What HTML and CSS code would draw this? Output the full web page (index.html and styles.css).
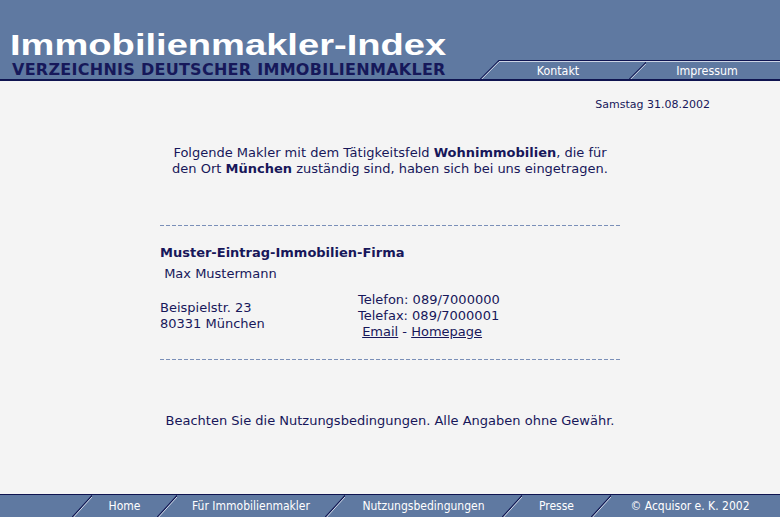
FILE: index.html
```html
<!DOCTYPE html>
<html lang="de">
<head>
<meta charset="utf-8">
<title>Immobilienmakler-Index</title>
<link rel="stylesheet" href="styles.css">
</head>
<body>
<div class="page">
  <header class="header">
    <div class="brand">
      <div class="title">Immobilienmakler-Index</div>
      <div class="subtitle">VERZEICHNIS DEUTSCHER IMMOBILIENMAKLER</div>
    </div>
    <nav class="tabs">
      <svg class="tab-slash" width="19" height="19" viewBox="0 0 19 19">
        <line x1="0" y1="19.5" x2="19.5" y2="0" stroke="#0f1450" stroke-width="1.2"/>
        <line x1="1.3" y1="19.5" x2="19.5" y2="1.3" stroke="#d3dae8" stroke-width="1"/>
      </svg>
      <div class="tabrow">
        <a class="tab tab-first">Kontakt</a>
        <svg class="tab-slash-inner" width="17" height="17" viewBox="0 0 17 17">
          <line x1="0" y1="17.5" x2="17.5" y2="0" stroke="#0f1450" stroke-width="1.2"/>
          <line x1="1.3" y1="17.5" x2="18" y2="0.8" stroke="#d3dae8" stroke-width="1"/>
        </svg>
        <a class="tab tab-last">Impressum</a>
      </div>
    </nav>
  </header>

  <main class="main">
    <div class="date">Samstag 31.08.2002</div>
    <div class="content">
      <p class="intro">Folgende Makler mit dem Tätigkeitsfeld <b>Wohnimmobilien</b>, die für<br>den Ort <b>München</b> zuständig sind, haben sich bei uns eingetragen.</p>
      <div class="rule"></div>
      <div class="entry">
        <div class="company">Muster-Eintrag-Immobilien-Firma</div>
        <div class="person">&nbsp;Max Mustermann</div>
        <div class="contact">
          <div class="address">Beispielstr. 23<br>80331 München</div>
          <div class="phones">Telefon: 089/7000000<br>Telefax: 089/7000001<br>&nbsp;<a class="link">Email</a> - <a class="link">Homepage</a></div>
        </div>
      </div>
      <div class="rule rule-bottom"></div>
      <p class="notice">Beachten Sie die Nutzungsbedingungen. Alle Angaben ohne Gewähr.</p>
    </div>
  </main>

  <footer class="footer">
    <div class="foot-lead"></div>
    <svg class="foot-slash" width="20" height="22" viewBox="0 0 20 22"><line x1="0" y1="22.5" x2="20.5" y2="0" stroke="#0f1450" stroke-width="1.2"/><line x1="1.3" y1="22.5" x2="21" y2="0.9" stroke="#d3dae8" stroke-width="1"/></svg>
    <a class="foot-item w-home">Home</a>
    <svg class="foot-slash" width="20" height="22" viewBox="0 0 20 22"><line x1="0" y1="22.5" x2="20.5" y2="0" stroke="#0f1450" stroke-width="1.2"/><line x1="1.3" y1="22.5" x2="21" y2="0.9" stroke="#d3dae8" stroke-width="1"/></svg>
    <a class="foot-item w-makler">Für Immobilienmakler</a>
    <svg class="foot-slash" width="20" height="22" viewBox="0 0 20 22"><line x1="0" y1="22.5" x2="20.5" y2="0" stroke="#0f1450" stroke-width="1.2"/><line x1="1.3" y1="22.5" x2="21" y2="0.9" stroke="#d3dae8" stroke-width="1"/></svg>
    <a class="foot-item w-nutz">Nutzungsbedingungen</a>
    <svg class="foot-slash" width="20" height="22" viewBox="0 0 20 22"><line x1="0" y1="22.5" x2="20.5" y2="0" stroke="#0f1450" stroke-width="1.2"/><line x1="1.3" y1="22.5" x2="21" y2="0.9" stroke="#d3dae8" stroke-width="1"/></svg>
    <a class="foot-item w-presse">Presse</a>
    <svg class="foot-slash" width="20" height="22" viewBox="0 0 20 22"><line x1="0" y1="22.5" x2="20.5" y2="0" stroke="#0f1450" stroke-width="1.2"/><line x1="1.3" y1="22.5" x2="21" y2="0.9" stroke="#d3dae8" stroke-width="1"/></svg>
    <span class="foot-item w-copy">© Acquisor e. K. 2002</span>
  </footer>
</div>
</body>
</html>
```

FILE: styles.css
```css
* { box-sizing: border-box; }
html, body { margin: 0; padding: 0; }
body {
  background: #f4f4f4;
  color: #17175a;
  font-family: "DejaVu Sans", Verdana, sans-serif;
  font-size: 13px;
  line-height: 16px;
}
.page {
  display: flex;
  flex-direction: column;
  height: 100vh;
}

/* header */
.header {
  flex: none;
  height: 81px;
  background: #5f79a1;
  border-bottom: 2px solid #0f1450;
  display: flex;
  align-items: flex-end;
}
.brand {
  flex: 1;
  padding-left: 10px;
  padding-bottom: 2px;
}
.title {
  font-family: "Liberation Sans", Arial, sans-serif;
  font-weight: bold;
  font-size: 30px;
  line-height: 30px;
  color: #ffffff;
  white-space: nowrap;
  transform: scaleX(1.27);
  transform-origin: left center;
}
.subtitle {
  font-family: "DejaVu Sans", Verdana, sans-serif;
  font-weight: bold;
  font-size: 16px;
  line-height: 14px;
  letter-spacing: 0.27px;
  color: #16185a;
  margin-top: 3px;
  padding-left: 2px;
  white-space: nowrap;
}
.tabs {
  flex: none;
  width: 300px;
  height: 19px;
  display: flex;
}
.tab-slash { flex: none; display: block; }
.tabrow {
  flex: 1;
  display: flex;
  border-top: 1px solid #0f1450;
  box-shadow: inset 0 1px 0 #cdd5e5;
}
.tab-slash-inner { flex: none; display: block; margin-top: 1px; }
.tab {
  color: #ffffff;
  font-family: "DejaVu Sans Condensed", "DejaVu Sans", sans-serif;
  font-size: 12.3px;
  line-height: 18px;
  padding-top: 1px;
  text-align: center;
  padding-right: 12px;
  white-space: nowrap;
}
.tab-first { width: 130px; flex: none; }
.tab-last { flex: 1; }

/* main */
.main {
  flex: 1;
  padding-top: 16px;
}
.date {
  font-size: 11px;
  line-height: 16px;
  text-align: right;
  padding-right: 70px;
}
.content {
  width: 460px;
  margin: 0 auto;
}
.intro {
  margin: 32px 0 0;
  text-align: center;
}
.rule {
  height: 1px;
  margin-top: 48px;
  background-image: linear-gradient(to right, #7a8fb8 0, #7a8fb8 4px, transparent 4px, transparent 6px);
  background-size: 6px 1px;
  background-repeat: repeat-x;
}
.rule-bottom { margin-top: 19px; }
.company {
  margin-top: 19px;
  font-weight: bold;
}
.person {
  margin-top: 5px;
}
.contact {
  margin-top: 10px;
  display: grid;
  grid-template-columns: 198px auto;
  align-items: center;
}
.link {
  color: #17175a;
  text-decoration: underline;
}
.notice {
  margin: 53px 0 0;
  text-align: center;
}

/* footer */
.footer {
  flex: none;
  height: 23px;
  border-top: 1px solid #0f1450;
  background: #5f79a1;
  display: flex;
  color: #ffffff;
  font-family: "DejaVu Sans Condensed", "DejaVu Sans", sans-serif;
  font-size: 12px;
  line-height: 22px;
}
.foot-lead { flex: none; width: 72px; }
.foot-slash { flex: none; display: block; }
.foot-item {
  flex: none;
  text-align: center;
  white-space: nowrap;
  color: #ffffff;
}
.w-home { width: 65px; }
.w-makler { width: 148px; }
.w-nutz { width: 157px; }
.w-presse { width: 69px; }
.w-copy { flex: 1; padding-right: 11px; }
```
